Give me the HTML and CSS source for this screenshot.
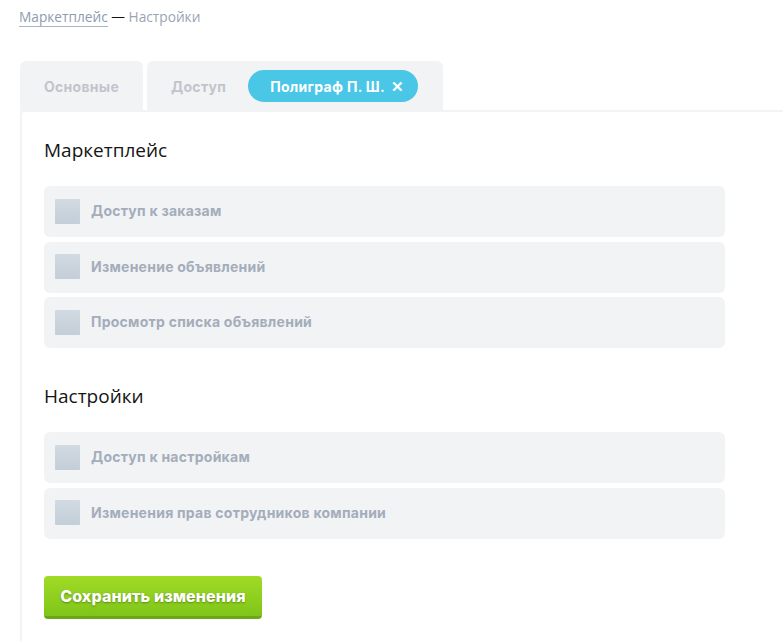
FILE: index.html
```html
<!DOCTYPE html>
<html lang="ru">
<head>
<meta charset="utf-8">
<title>Настройки</title>
<link rel="stylesheet" href="styles.css">
</head>
<body>
<div class="page">
  <nav class="crumbs"><a class="crumb-link" href="#">Маркетплейс</a> <span class="dash">—</span> <span class="crumb-current">Настройки</span></nav>
  <div class="tabs">
    <div class="tab tab-first">Основные</div>
    <div class="tab tab-second">
      <span class="tab-label">Доступ</span>
      <span class="pill">Полиграф П. Ш. <span class="pill-x">✕</span></span>
    </div>
  </div>
  <section class="panel">
    <h2 class="group-title">Маркетплейс</h2>
    <div class="rows">
      <label class="row"><span class="box"></span><span class="row-text">Доступ к заказам</span></label>
      <label class="row"><span class="box"></span><span class="row-text">Изменение объявлений</span></label>
      <label class="row"><span class="box"></span><span class="row-text">Просмотр списка объявлений</span></label>
    </div>
    <h2 class="group-title group-title-2">Настройки</h2>
    <div class="rows">
      <label class="row"><span class="box"></span><span class="row-text">Доступ к настройкам</span></label>
      <label class="row"><span class="box"></span><span class="row-text">Изменения прав сотрудников компании</span></label>
    </div>
    <button class="save" type="button">Сохранить изменения</button>
  </section>
</div>
</body>
</html>
```
FILE: styles.css
```css
* { box-sizing: border-box; }
html, body { margin: 0; padding: 0; background: #fff; }
body { font-family: "Open Sans", "Liberation Sans", sans-serif; overflow: hidden; }
.page { padding: 7px 0 0 19px; }
.crumbs { font-size: 13.7px; line-height: 20px; color: #9aa5b5; }
.crumb-link { color: #8d9bb0; text-decoration: none; border-bottom: 1px solid #a9b4c3; }
.dash { color: #111; }
.tabs { display: flex; gap: 4px; margin-top: 34px; margin-left: 1px; height: 50px; }
.tab { background: #f2f3f5; border-radius: 6px 6px 0 0; display: flex; align-items: center; font-family: Inter, "Open Sans", sans-serif; font-weight: 700; font-size: 14px; color: #c0c5cc; letter-spacing: 0.3px; }
.tab-first { width: 123px; justify-content: center; padding-left: 0; }
.tab-second { width: 296px; padding-left: 24px; }
.tab-label { margin-right: 22px; }
.pill { background: #4ac6e6; color: #fff; height: 32px; border-radius: 16px; display: inline-flex; align-items: center; padding: 0 14px 0 22px; font-size: 14px; letter-spacing: 0.3px; }
.pill-x { margin-left: 6px; font-size: 15px; }
.panel { margin-left: 1px; border-left: 2px solid #f2f3f5; border-top: 2px solid #f2f3f5; border-top-left-radius: 4px; padding: 25px 0 40px 22px; margin-top: -1px; }
.group-title { margin: 0; font-weight: 400; font-size: 19px; line-height: 26px; color: #151515; }
.group-title-2 { margin-top: 35px; }
.rows { display: flex; flex-direction: column; gap: 4.5px; margin-top: 23px; width: 681px; }
.row { height: 51px; background: #f2f3f5; border-radius: 6px; display: flex; align-items: center; padding-left: 11px; padding-bottom: 2px; }
.box { width: 25px; height: 25px; background: linear-gradient(#d2dae2, #c3ced8); border-radius: 1px; flex: none; margin-top: 1px; }
.row-text { margin-left: 11px; font-family: Inter, "Open Sans", sans-serif; font-weight: 700; font-size: 14px; letter-spacing: 0.25px; color: #a3adbb; }
.save { margin-top: 37px; width: 218px; height: 43px; border: 0; border-bottom: 3px solid #6ba717; border-radius: 4px; background: linear-gradient(#a0db26, #80c51a); color: #fff; font-family: Inter, "Open Sans", sans-serif; font-weight: 800; font-size: 16px; letter-spacing: 0.1px; text-shadow: 0 1px 2px rgba(40, 80, 0, 0.5); padding: 0; cursor: pointer; }
```
